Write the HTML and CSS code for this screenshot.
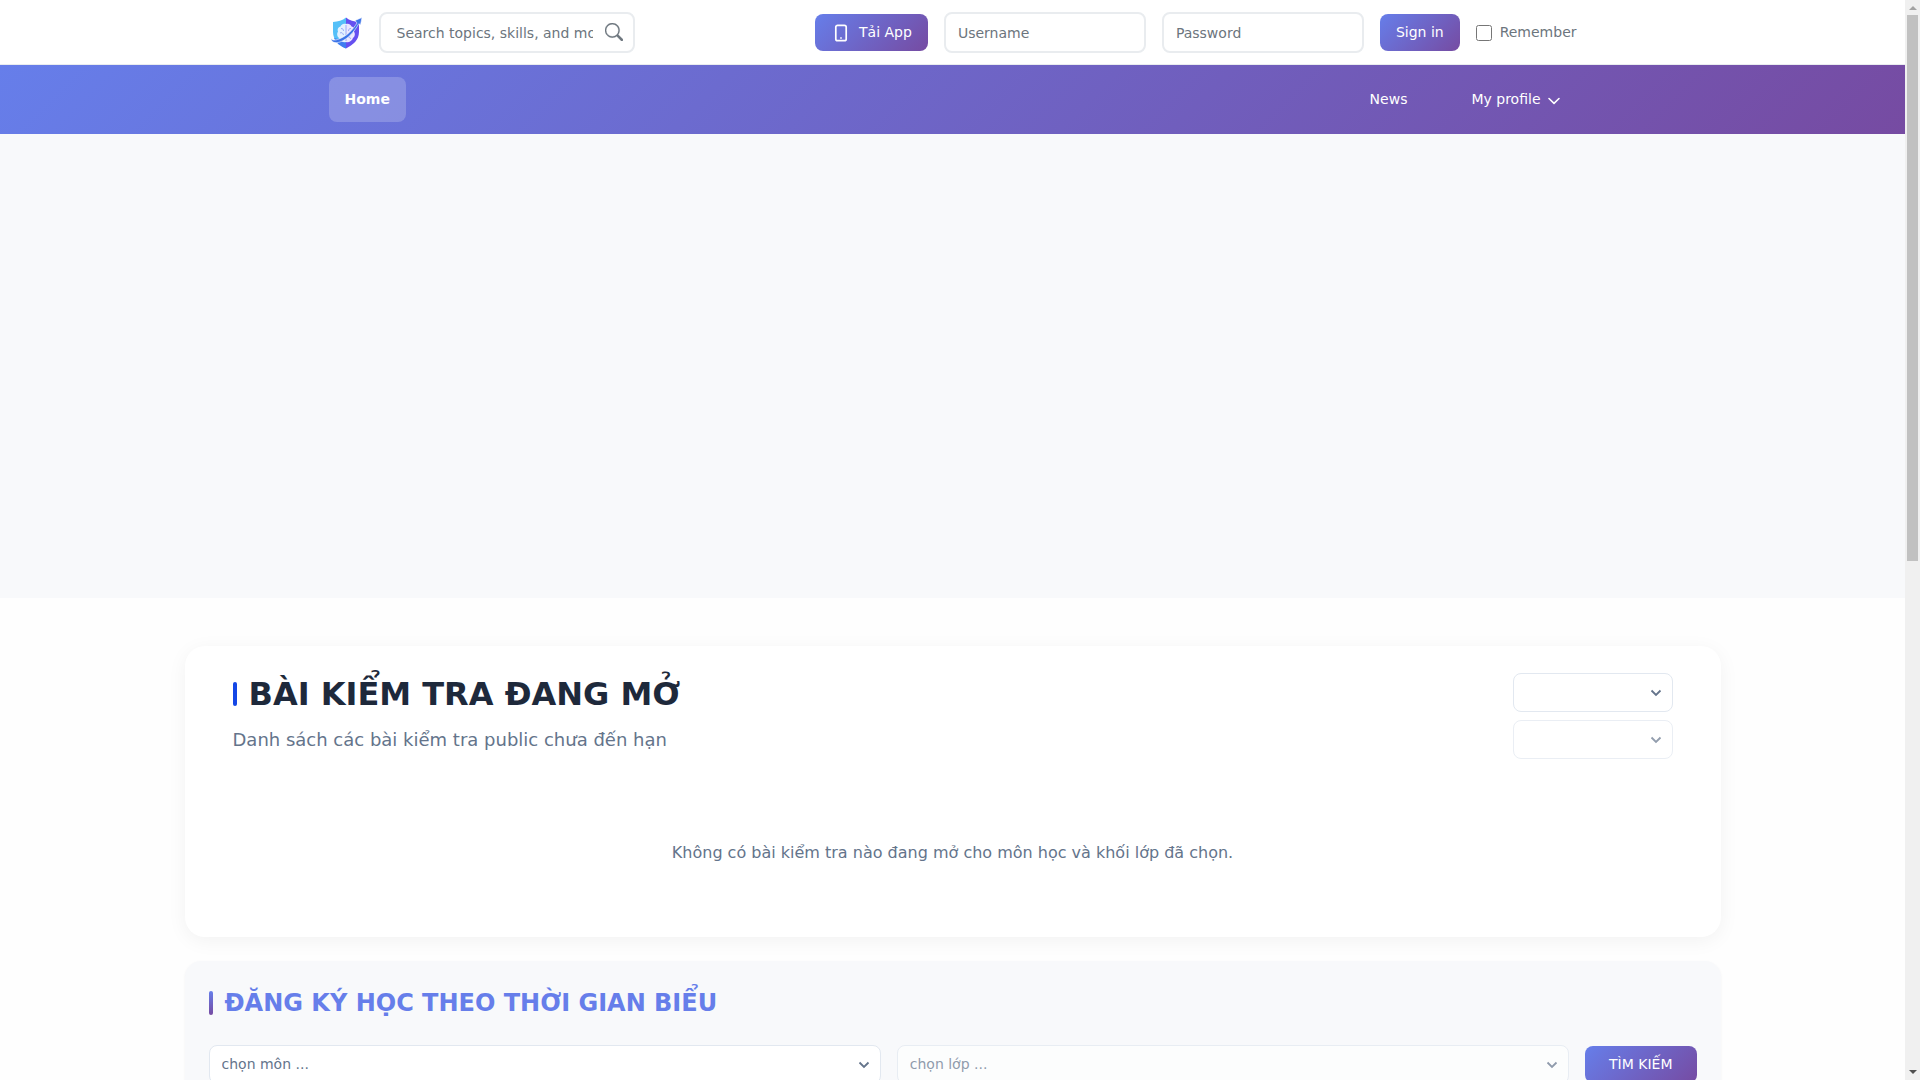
FILE: index.html
```html
<!DOCTYPE html>
<html lang="vi">
<head>
  <meta charset="UTF-8" />
  <meta name="viewport" content="width=device-width, initial-scale=1.0"/>
  <title>Home</title>
  <link rel="stylesheet" href="styles.css">
</head>
<body>
  <header class="topbar">
    <div class="container topbar-inner">
      <a href="/" class="logo" aria-label="Home page">
        <svg width="34" height="34" viewBox="0 0 34 34">
          <path d="M17 1.500C13.500 4.500 9 5.500 4 6v10c0 8 6 13 13 16.500z" fill="#55c0f8"/>
          <path d="M17 1.500C20.500 4.500 25 5.500 30 6v10c0 8-6 13-13 16.500z" fill="#6650f0"/>
          <path d="M5 22c2 5 6.500 8.500 12 10.500V25z" fill="#3f7df0"/>
          <path d="M17 8c-3-1-5 1-5.500 2.500C9 11 8 13.500 9 15.500c-1.500 2-1 5 1 6.500 1 3 4.500 5 7 4z" fill="#e4f1ff"/>
          <path d="M17 8c3-1 5 1 5.500 2.500C25 11 26 13.500 25 15.500c1.500 2 1 5-1 6.500-1 3-4.500 5-7 4z" fill="#ebe7ff"/>
          <path d="M12 12.500c2 0 2.500 1 2.500 2.500M11 17c1.500-1 3 0 3.500 2M22 12.500c-2 0-2.500 1-2.500 2.500M23.500 17c-1.500-1-3 0-3.500 2M21.500 23c0-1.500-1-2-2-2M17 9v16" fill="none" stroke="#8c9cf4" stroke-width="0.800"/>
          <path d="M2 22c.5 2.500 4 2.500 8 1 8-3 13.500-9 18-16l-2-2.500 7-3-1.500 7.500-1.700-1.300C25 16 19 23 11 26c-5 1.500-9 .5-9-4z" fill="#3d74e8" stroke="#ffffff" stroke-width="0.600"/>
        </svg>
      </a>
      <form class="search" role="search">
        <input type="text" class="field search-input" placeholder="Search topics, skills, and more" aria-label="Search">
        <button type="submit" class="search-btn" aria-label="Search">
          <svg width="18" height="18" viewBox="0 0 16 16" fill="currentColor" stroke="currentColor" stroke-width="0.300"><path d="M11.742 10.344a6.500 6.500 0 1 0-1.397 1.398h-.001c.030.040.062.078.098.115l3.850 3.850a1 1 0 0 0 1.415-1.414l-3.850-3.850a1.007 1.007 0 0 0-.115-.100zM12 6.500a5.500 5.500 0 1 1-11 0 5.500 5.500 0 0 1 11 0z"/></svg>
        </button>
      </form>
      <form class="login">
        <button type="button" class="btn btn-app">
          <svg width="20" height="18" viewBox="0 0 20 18" fill="none" stroke="currentColor" stroke-width="1.700"><rect x="4.800" y="1.300" width="10.400" height="15.400" rx="1.800"/><path d="M9.200 14h1.600"/></svg>
          Tải App
        </button>
        <input type="text" class="field login-input" placeholder="Username" aria-label="Username">
        <input type="password" class="field login-input" placeholder="Password" aria-label="Password">
        <button type="submit" class="btn">Sign in</button>
        <label class="remember"><input type="checkbox" class="remember-box"> Remember</label>
      </form>
    </div>
  </header>

  <nav class="navbar">
    <div class="container navbar-inner">
      <a href="/" class="nav-link active">Home</a>
      <div class="nav-right">
        <a href="/news" class="nav-link">News</a>
        <a href="/profile" class="nav-link">My profile
          <svg width="14" height="14" viewBox="0 0 14 14" fill="none" stroke="currentColor" stroke-width="1.600" stroke-linecap="round" stroke-linejoin="round"><path d="M2 5.500 7 10.300 12 5.500"/></svg>
        </a>
      </div>
    </div>
  </nav>

  <div class="hero"></div>

  <main class="page">
    <section class="card">
      <div class="card-head">
        <div>
          <h1 class="card-title">BÀI KIỂM TRA ĐANG MỞ</h1>
          <p class="card-subtitle">Danh sách các bài kiểm tra public chưa đến hạn</p>
        </div>
        <div class="filters">
          <select class="select" aria-label="Môn học"><option></option></select>
          <select class="select" aria-label="Khối lớp" disabled><option></option></select>
        </div>
      </div>
      <p class="empty">Không có bài kiểm tra nào đang mở cho môn học và khối lớp đã chọn.</p>
    </section>

    <section class="schedule">
      <h2 class="schedule-title">ĐĂNG KÝ HỌC THEO THỜI GIAN BIỂU</h2>
      <form class="schedule-form">
        <select class="select" aria-label="Chọn môn"><option>chọn môn ...</option></select>
        <select class="select" aria-label="Chọn lớp" disabled><option>chọn lớp ...</option></select>
        <button type="submit" class="btn btn-find">TÌM KIẾM</button>
      </form>
    </section>
  </main>

  <div class="scrollbar" aria-hidden="true">
    <span class="scroll-arrow up"></span>
    <div class="scroll-track"><div class="scroll-thumb"></div></div>
    <span class="scroll-arrow down"></span>
  </div>
</body>
</html>
```
FILE: styles.css
```css
* {
  box-sizing: border-box;
}

html {
  scrollbar-width: none;
}

body {
  margin: 0;
  padding-right: 15px;
  font-family: 'DejaVu Sans', sans-serif;
  font-size: 14px;
  line-height: 21px;
  color: #1e293b;
  background-color: #fefefe;
}

input,
select,
button {
  font-family: inherit;
  font-size: 14px;
  line-height: 21px;
}

.container {
  max-width: 1280px;
  margin: 0 auto;
  padding: 0 16px;
}

/* top bar */
.topbar {
  background-color: #ffffff;
  border-bottom: 1px solid #e9ecef;
}

.topbar-inner {
  display: flex;
  align-items: center;
  gap: 16px;
  padding-top: 12px;
  padding-bottom: 11px;
}

.logo,
.logo svg {
  display: block;
}

.search {
  position: relative;
  width: 256px;
}

.field {
  width: 100%;
  height: 41px;
  padding: 8px 12px;
  border: 2px solid #e9ecef;
  border-radius: 8px;
  background-color: #ffffff;
  line-height: normal;
  color: #1e293b;
}

.field::placeholder {
  color: #6c757d;
}

.search-input {
  display: block;
  padding: 8px 40px 8px 16px;
}

.search-btn {
  position: absolute;
  top: 0;
  right: 12px;
  height: 40px;
  padding: 0;
  display: flex;
  align-items: center;
  border: none;
  background: none;
  color: #6c757d;
  cursor: pointer;
}

.login {
  display: flex;
  align-items: center;
  gap: 16px;
  margin-left: auto;
}

.login-input {
  width: 202px;
}

.btn {
  padding: 8px 16px;
  border: none;
  border-radius: 8px;
  background: linear-gradient(135deg, #667eea 0%, #764ba2 100%);
  color: #ffffff;
  cursor: pointer;
}

.btn-app {
  display: flex;
  align-items: center;
  gap: 8px;
}

.remember {
  display: flex;
  align-items: center;
  gap: 8px;
  color: #6c757d;
}

.remember-box {
  width: 16px;
  height: 16px;
  margin: 0;
}

/* navigation */
.navbar {
  background: linear-gradient(135deg, #667eea 0%, #764ba2 100%);
}

.navbar-inner {
  display: flex;
  align-items: center;
  justify-content: space-between;
  padding-top: 12px;
  padding-bottom: 12px;
}

.nav-right {
  display: flex;
  gap: 32px;
}

.nav-link {
  display: flex;
  align-items: center;
  gap: 6px;
  padding: 12px 16px;
  border-radius: 8px;
  color: #ffffff;
  text-decoration: none;
}

.nav-link.active {
  background-color: rgba(255, 255, 255, 0.2);
  font-weight: bold;
}

.hero {
  height: 464px;
  background-color: #f8f9fb;
}

/* content */
.page {
  max-width: 1568px;
  min-height: 1483px;
  margin: 0 auto;
  padding: 48px 16px;
}

.card {
  padding: 24px 48px 72px;
  border-radius: 20px;
  background-color: #ffffff;
  box-shadow: 0 4px 20px rgba(0, 0, 0, 0.05);
}

.card-head {
  display: flex;
  justify-content: space-between;
}

.card-title {
  display: flex;
  align-items: center;
  gap: 12px;
  margin: 0 0 8px;
  font-size: 32px;
  line-height: 48px;
}

.card-title::before,
.schedule-title::before {
  content: "";
  width: 4px;
  height: 24px;
  border-radius: 2px;
  background: #1447e6;
}

.card-subtitle {
  margin: 0;
  font-size: 18px;
  line-height: 27px;
  color: #64748b;
}

.filters {
  display: flex;
  flex-direction: column;
  gap: 8px;
  width: 160px;
  padding-top: 3px;
}

.select {
  width: 100%;
  height: 39px;
  padding: 8px 36px 8px 12px;
  border: 1px solid #e2e8f0;
  border-radius: 8px;
  appearance: none;
  background: #ffffff url("data:image/svg+xml,%3Csvg xmlns='http://www.w3.org/2000/svg' viewBox='0 0 12 12' fill='none' stroke='%2364748b' stroke-width='1.8'%3E%3Cpath d='M1.500 3.500 6 8l4.500-4.500'/%3E%3C/svg%3E") no-repeat right 10px center / 12px;
  color: #64748b;
}

.select:disabled {
  opacity: 0.7;
}

.empty {
  margin: 82px 0 0;
  font-size: 16px;
  line-height: 24px;
  text-align: center;
  color: #64748b;
}

.schedule {
  margin-top: 24px;
  padding: 24px;
  border-radius: 16px;
  background-color: #f8f9fb;
  box-shadow: 0 1px 3px rgba(0, 0, 0, 0.05);
}

.schedule-title {
  display: flex;
  align-items: center;
  gap: 12px;
  margin: 0 0 24px;
  font-size: 24px;
  line-height: 36px;
  color: #667eea;
}

.schedule-title::before {
  background: linear-gradient(180deg, #667eea, #764ba2);
}

.schedule-form {
  display: grid;
  grid-template-columns: 1fr 1fr auto;
  align-items: center;
  gap: 16px;
}

.btn-find {
  padding: 8px 24px;
}

/* scrollbar */
.scrollbar {
  position: fixed;
  top: 0;
  right: 0;
  bottom: 0;
  width: 15px;
  display: flex;
  flex-direction: column;
  align-items: center;
  padding: 6px 0;
  background-color: #f0f0f0;
}

.scroll-track {
  flex: 1;
  width: 11px;
  margin: 5px 0;
}

.scroll-thumb {
  height: 52%;
  background-color: #c1c1c1;
}

.scroll-arrow {
  border: 4px solid transparent;
}

.scroll-arrow.up {
  border-top: none;
  border-bottom-color: #a3a3a3;
}

.scroll-arrow.down {
  border-bottom: none;
  border-top-color: #505050;
}
```
